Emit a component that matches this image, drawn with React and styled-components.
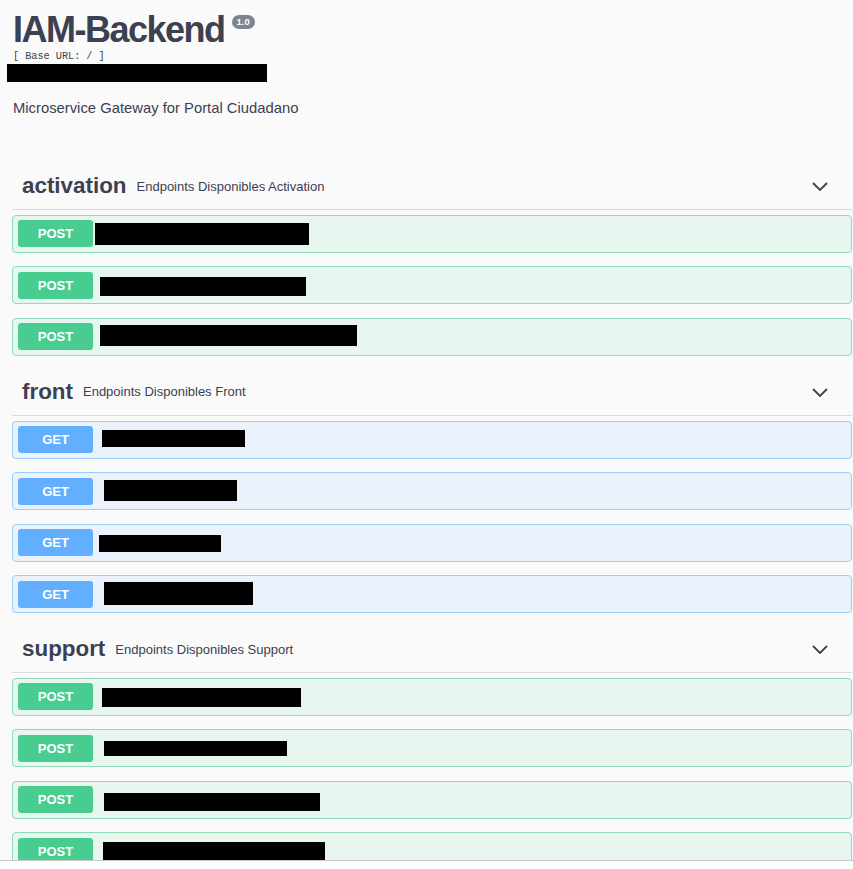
import React from "react";
import styled, { createGlobalStyle } from "styled-components";

const Global = createGlobalStyle`
  html, body { margin: 0; padding: 0; background: #ffffff; }
  body { font-family: "Liberation Sans", Arial, sans-serif; color: #3b4151; }
  * { box-sizing: border-box; }
`;

const Frame = styled.div`
  height: 861px;
  overflow: hidden;
  background: #fafafa;
  border-bottom: 1px solid #cacaca;
  padding: 0 1px 0 12px;
`;

const Info = styled.div`
  padding-top: 12px;
  padding-left: 1px;
`;

const TitleRow = styled.div`
  display: flex;
  align-items: flex-start;
`;

const Title = styled.h2`
  margin: 0;
  font-size: 36px;
  line-height: 36px;
  font-weight: 700;
  letter-spacing: -1.5px;
  color: #3b4151;
`;

const Version = styled.span`
  margin: 3px 0 0 7px;
  height: 14px;
  padding: 0 5px;
  border-radius: 7px;
  background: #7d8492;
  color: #fff;
  font-size: 9.5px;
  font-weight: 700;
  line-height: 14px;
`;

const BaseUrl = styled.div`
  margin-top: 3px;
  font-family: "Liberation Mono", "DejaVu Sans Mono", monospace;
  font-size: 10.2px;
  line-height: 12px;
  color: #3b4151;
`;

const Redact = styled.div`
  background: #000;
  flex: none;
`;

const UrlRedact = styled(Redact)`
  margin: 1px 0 0 -6px;
  width: 260px;
  height: 18px;
`;

const Description = styled.p`
  margin: 17.5px 0 0;
  font-size: 14.8px;
  line-height: 17px;
  color: #3b4151;
`;

const Section = styled.section`
  margin-top: ${(p) => (p.$first ? "47px" : "0")};
`;

const TagHeader = styled.div`
  height: 46.3px;
  display: flex;
  align-items: center;
  padding: 0 23px 0 10px;
  border-bottom: 1px solid #d9dadd;
  margin-bottom: 5px;
`;

const TagName = styled.span`
  font-size: 22.4px;
  font-weight: 700;
  color: #3b4151;
`;

const TagDesc = styled.span`
  margin-left: 10px;
  font-size: 13px;
  color: #3b4151;
  flex: 1;
`;

const Chevron = () => (
  <svg width="18" height="12" viewBox="0 0 18 12">
    <polyline points="2,3 9,10 16,3" fill="none" stroke="#3b4151" strokeWidth="1.8" />
  </svg>
);

const METHOD = {
  POST: { main: "#49cc90", bg: "#e7f6ef", border: "#8edbb6" },
  GET: { main: "#61affe", bg: "#eaf3fc", border: "#9fcdf9" },
};

const OpRow = styled.div`
  height: 38px;
  display: flex;
  align-items: center;
  padding: 0 5px;
  margin-bottom: 13.5px;
  border: 1.5px solid ${(p) => METHOD[p.$m].border};
  border-radius: 4px;
  background: ${(p) => METHOD[p.$m].bg};
`;

const Badge = styled.span`
  width: 75px;
  height: 27px;
  flex: none;
  display: flex;
  align-items: center;
  justify-content: center;
  border-radius: 3px;
  background: ${(p) => METHOD[p.$m].main};
  color: #fff;
  font-size: 13px;
  font-weight: 700;
`;

const PathRedact = styled(Redact)`
  align-self: flex-start;
`;

const sections = [
  {
    name: "activation",
    desc: "Endpoints Disponibles Activation",
    method: "POST",
    ops: [
      [95, 214, 9, 22],
      [100, 206, 11, 19],
      [100, 257, 8, 21],
    ],
  },
  {
    name: "front",
    desc: "Endpoints Disponibles Front",
    method: "GET",
    ops: [
      [102, 143, 10, 17],
      [104, 133, 8, 21],
      [99, 122, 12, 17],
      [104, 149, 7, 23],
    ],
  },
  {
    name: "support",
    desc: "Endpoints Disponibles Support",
    method: "POST",
    ops: [
      [102, 199, 11, 19],
      [104, 183, 12, 15],
      [104, 216, 13, 18],
      [103, 222, 10, 20],
    ],
  },
];

export default function App() {
  return (
    <>
      <Global />
      <Frame>
        <Info>
          <TitleRow>
            <Title>IAM-Backend</Title>
            <Version>1.0</Version>
          </TitleRow>
          <BaseUrl>[ Base URL: / ]</BaseUrl>
          <UrlRedact />
          <Description>Microservice Gateway for Portal Ciudadano</Description>
        </Info>
        {sections.map((s, i) => (
          <Section key={s.name} $first={i === 0}>
            <TagHeader>
              <TagName>{s.name}</TagName>
              <TagDesc>{s.desc}</TagDesc>
              <Chevron />
            </TagHeader>
            {s.ops.map(([x, w, dy, h], j) => (
              <OpRow key={j} $m={s.method}>
                <Badge $m={s.method}>{s.method}</Badge>
                <PathRedact
                  style={{ marginLeft: x - 93, width: w, height: h, marginTop: dy - 1.5 }}
                />
              </OpRow>
            ))}
          </Section>
        ))}
      </Frame>
    </>
  );
}
